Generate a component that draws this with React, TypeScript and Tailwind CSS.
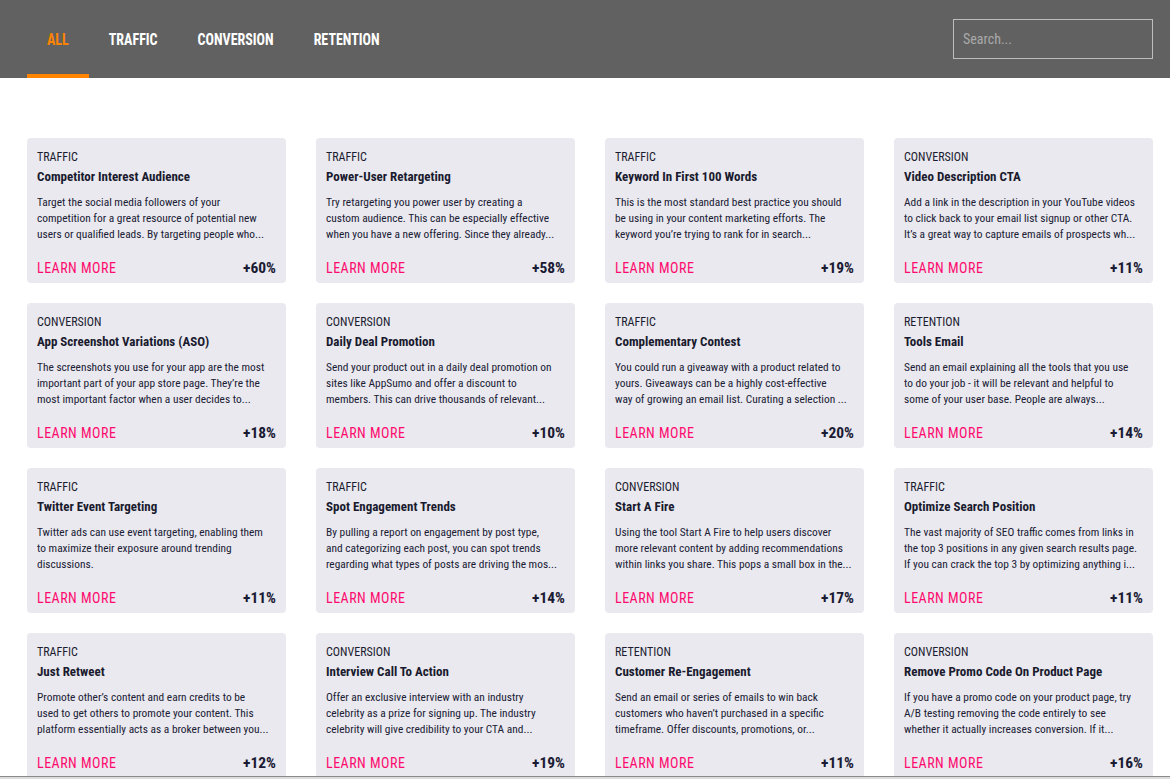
type Card = { cat: string; title: string; lines: string[]; pct: string };

const cards: Card[] = [
  { cat: 'TRAFFIC', title: 'Competitor Interest Audience', lines: ['Target the social media followers of your', 'competition for a great resource of potential new', 'users or qualified leads. By targeting people who...'], pct: '+60%' },
  { cat: 'TRAFFIC', title: 'Power-User Retargeting', lines: ['Try retargeting you power user by creating a', 'custom audience. This can be especially effective', 'when you have a new offering. Since they already...'], pct: '+58%' },
  { cat: 'TRAFFIC', title: 'Keyword In First 100 Words', lines: ['This is the most standard best practice you should', 'be using in your content marketing efforts. The', 'keyword you\u2019re trying to rank for in search...'], pct: '+19%' },
  { cat: 'CONVERSION', title: 'Video Description CTA', lines: ['Add a link in the description in your YouTube videos', 'to click back to your email list signup or other CTA.', 'It\u2019s a great way to capture emails of prospects wh...'], pct: '+11%' },
  { cat: 'CONVERSION', title: 'App Screenshot Variations (ASO)', lines: ['The screenshots you use for your app are the most', 'important part of your app store page. They\u2019re the', 'most important factor when a user decides to...'], pct: '+18%' },
  { cat: 'CONVERSION', title: 'Daily Deal Promotion', lines: ['Send your product out in a daily deal promotion on', 'sites like AppSumo and offer a discount to', 'members. This can drive thousands of relevant...'], pct: '+10%' },
  { cat: 'TRAFFIC', title: 'Complementary Contest', lines: ['You could run a giveaway with a product related to', 'yours. Giveaways can be a highly cost-effective', 'way of growing an email list. Curating a selection ...'], pct: '+20%' },
  { cat: 'RETENTION', title: 'Tools Email', lines: ['Send an email explaining all the tools that you use', 'to do your job - it will be relevant and helpful to', 'some of your user base. People are always...'], pct: '+14%' },
  { cat: 'TRAFFIC', title: 'Twitter Event Targeting', lines: ['Twitter ads can use event targeting, enabling them', 'to maximize their exposure around trending', 'discussions.'], pct: '+11%' },
  { cat: 'TRAFFIC', title: 'Spot Engagement Trends', lines: ['By pulling a report on engagement by post type,', 'and categorizing each post, you can spot trends', 'regarding what types of posts are driving the mos...'], pct: '+14%' },
  { cat: 'CONVERSION', title: 'Start A Fire', lines: ['Using the tool Start A Fire to help users discover', 'more relevant content by adding recommendations', 'within links you share. This pops a small box in the...'], pct: '+17%' },
  { cat: 'TRAFFIC', title: 'Optimize Search Position', lines: ['The vast majority of SEO traffic comes from links in', 'the top 3 positions in any given search results page.', 'If you can crack the top 3 by optimizing anything i...'], pct: '+11%' },
  { cat: 'TRAFFIC', title: 'Just Retweet', lines: ['Promote other\u2019s content and earn credits to be', 'used to get others to promote your content. This', 'platform essentially acts as a broker between you...'], pct: '+12%' },
  { cat: 'CONVERSION', title: 'Interview Call To Action', lines: ['Offer an exclusive interview with an industry', 'celebrity as a prize for signing up. The industry', 'celebrity will give credibility to your CTA and...'], pct: '+19%' },
  { cat: 'RETENTION', title: 'Customer Re-Engagement', lines: ['Send an email or series of emails to win back', 'customers who haven\u2019t purchased in a specific', 'timeframe. Offer discounts, promotions, or...'], pct: '+11%' },
  { cat: 'CONVERSION', title: 'Remove Promo Code On Product Page', lines: ['If you have a promo code on your product page, try', 'A/B testing removing the code entirely to see', 'whether it actually increases conversion. If it...'], pct: '+16%' },
];

const tabs = ['ALL', 'TRAFFIC', 'CONVERSION', 'RETENTION'];

export default function App() {
  return (
    <div className="h-[779px] overflow-hidden bg-white font-['Roboto_Condensed','Liberation_Sans',sans-serif]">
      <header className="flex h-[78px] items-stretch justify-between bg-[#616161] pl-[27px] pr-[17px]">
        <nav className="flex items-stretch">
          {tabs.map((t, i) => (
            <div
              key={t}
              className={
                i === 0
                  ? 'flex items-center border-b-4 border-[#ff8400] px-5 pt-1 text-[14px] font-bold text-[#ff8400]'
                  : 'flex items-center border-b-4 border-transparent px-5 pt-1 text-[14px] font-bold text-white'
              }
            >
              <span className="inline-block scale-y-[1.22]">{t}</span>
            </div>
          ))}
        </nav>
        <div className="flex items-center">
          <div className="flex h-[40px] w-[200px] items-center border border-[#bdbdbd] px-[9px] text-[14px] text-[#a9a9a9]">
            Search...
          </div>
        </div>
      </header>
      <main className="grid grid-cols-4 gap-x-[30px] gap-y-[20px] pl-[27px] pr-[17px] pt-[60px]">
        {cards.map((c) => (
          <div key={c.title} className="flex h-[145px] flex-col rounded-[4px] bg-[#e9e9ef] px-[10px] pt-[11px] pb-[5px]">
            <div className="text-[12px] leading-[16px] text-[#1c1c30]">{c.cat}</div>
            <div className="mt-[3px] text-[13px] font-bold leading-[18px] text-[#1a1a2e]">{c.title}</div>
            <div className="mt-[8px] text-[11.4px] leading-[16px] text-[#202034]">
              {c.lines.map((l, i) => (
                <div key={i} className="overflow-hidden whitespace-nowrap">
                  {l}
                </div>
              ))}
            </div>
            <div className="mt-auto flex items-center justify-between leading-[20px]">
              <span className="text-[14px] tracking-[0.5px] text-[#ff0a6e]">LEARN MORE</span>
              <span className="text-[15.5px] font-bold text-[#1a1a33]">{c.pct}</span>
            </div>
          </div>
        ))}
      </main>
      <div className="fixed bottom-0 left-0 right-0 h-[3px] border-t border-[#8a8a8a] bg-[#dcdcdc]" />
    </div>
  );
}
